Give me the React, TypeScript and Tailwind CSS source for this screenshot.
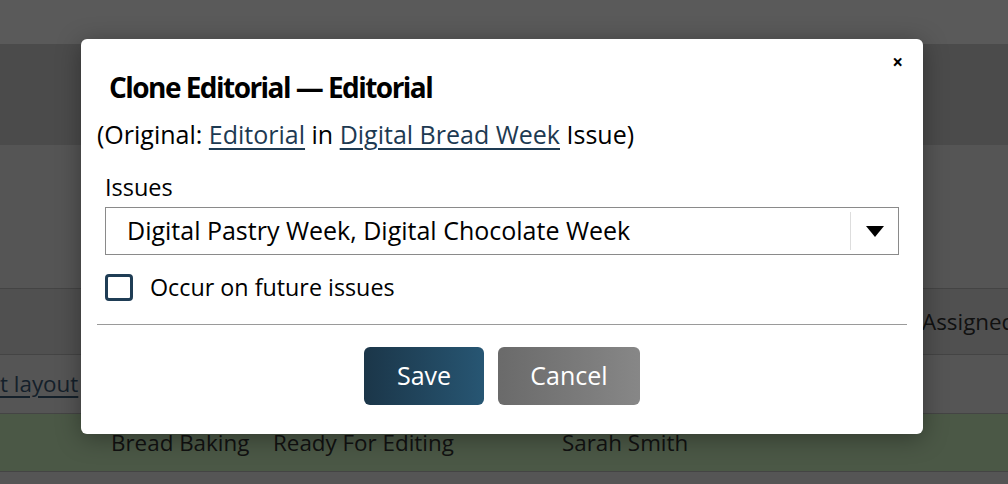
import { useState } from 'react'

const font = { fontFamily: '"Open Sans", "Noto Sans", sans-serif' }

function Background() {
  return (
    <div className="flex h-[484px] w-[1008px] flex-col overflow-hidden bg-[#555555] text-[22.4px] text-[#111111]">
      <div className="h-[44px] shrink-0 bg-[#5a5a5a]" />
      <div className="h-[101px] shrink-0 bg-[#4b4b4b]" />
      <div className="h-[144px] shrink-0 border-b border-[#444444] bg-[#555555]" />
      <div className="flex h-[66px] shrink-0 items-center justify-end border-b border-[#444444] bg-[#505050]">
        <span className="mr-[-30px] w-[116px]">Assigned</span>
      </div>
      <div className="flex h-[59px] shrink-0 items-center border-b border-[#444444] bg-[#555555]">
        <span className="ml-[0px] text-[#14202a] underline underline-offset-4">t layout</span>
      </div>
      <div className="flex h-[58px] shrink-0 items-center border-b border-[#444444] bg-[#4b5846]">
        <span className="ml-[111px] w-[162px]">Bread Baking</span>
        <span className="w-[289px]">Ready For Editing</span>
        <span>Sarah Smith</span>
      </div>
    </div>
  )
}

function CloneDialog() {
  const [future, setFuture] = useState(false)
  return (
    <div className="absolute left-[81px] top-[39px] flex h-[395px] w-[842px] flex-col rounded-[6px] bg-white px-[16px] pt-[12px] text-black shadow-[0_4px_24px_rgba(0,0,0,0.35)]">
      <button className="absolute right-[20px] top-[14px] text-[19px] font-bold leading-none" aria-label="Close">
        ×
      </button>
      <h2 className="ml-[12px] mt-[18px] text-[28px] font-bold leading-[36px] tracking-[-0.055em]">
        Clone Editorial — Editorial
      </h2>
      <p className="mt-[13px] text-[25px] leading-[32px]">
        (Original:{' '}
        <a className="text-[#1d3a52] underline underline-offset-[4px]">Editorial</a> in{' '}
        <a className="text-[#1d3a52] underline underline-offset-[4px]">Digital Bread Week</a> Issue)
      </p>
      <div className="mx-[8px] mt-[22px] flex flex-col">
        <label className="text-[23.5px] leading-[30px]">Issues</label>
        <div className="mt-[5px] flex h-[48px] items-center border border-[#8a8a8a]">
          <span className="flex-1 pl-[21px] text-[25px]">Digital Pastry Week, Digital Chocolate Week</span>
          <div className="flex h-[38px] w-[48px] items-center justify-center border-l border-[#dddddd]">
            <svg width="18" height="11" viewBox="0 0 18 11">
              <path d="M0 0h18L9 11z" fill="#000" />
            </svg>
          </div>
        </div>
        <label className="mt-[17px] flex h-[30px] items-center gap-[17px]" onClick={() => setFuture(!future)}>
          <span className="h-[27px] w-[28px] rounded-[4px] border-[3px] border-[#1f3d55]" />
          <span className="text-[23.3px] leading-[30px]">Occur on future issues</span>
        </label>
      </div>
      <hr className="mt-[22px] border-t border-[#9a9a9a]" />
      <div className="mt-[22px] flex justify-center gap-[14px]">
        <button className="h-[58px] w-[120px] rounded-[6px] bg-gradient-to-r from-[#1b3649] to-[#275673] text-[25px] text-white">
          Save
        </button>
        <button className="h-[58px] w-[142px] rounded-[6px] bg-gradient-to-r from-[#6a6a6a] to-[#878787] text-[25px] text-white">
          Cancel
        </button>
      </div>
    </div>
  )
}

export default function App() {
  return (
    <div className="relative h-[484px] w-[1008px] overflow-hidden" style={font}>
      <Background />
      <CloneDialog />
    </div>
  )
}
